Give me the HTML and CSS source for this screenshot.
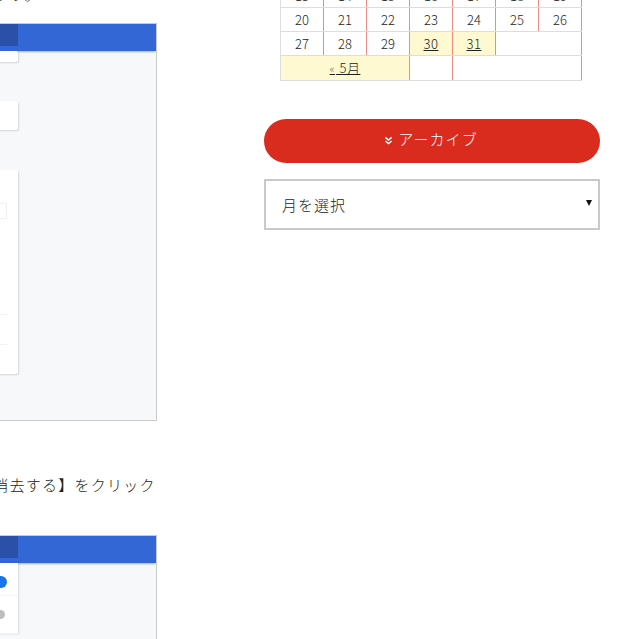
FILE: index.html
```html
<!DOCTYPE html>
<html lang="ja">
<head>
    <meta charset="UTF-8">
    <meta name="viewport" content="width=device-width, initial-scale=1.0">
    <title>ブログ</title>
    <link rel="stylesheet" href="styles.css">
</head>
<body>
    <div class="page">
        <main class="article">
            <p class="first">履歴を消去します。</p>
            <div class="shot">
                <div class="shot-bar"><span class="shot-logo"></span></div>
                <div class="shot-body">
                    <div class="shot-cards">
                        <div class="card card-a"></div>
                        <div class="card card-b"></div>
                        <div class="card card-c">
                            <span class="card-input"></span>
                            <span class="card-line line-a"></span>
                            <span class="card-line line-b"></span>
                        </div>
                    </div>
                </div>
            </div>
            <p class="second">【データを消去する】をクリック</p>
            <div class="shot shot-two">
                <div class="shot-bar"><span class="shot-logo"></span></div>
                <div class="shot-body">
                    <div class="shot-list">
                        <div class="list-row row-on"><span class="dot dot-on"></span></div>
                        <div class="list-row row-off"><span class="dot dot-off"></span></div>
                    </div>
                </div>
            </div>
        </main>

        <aside class="sidebar">
            <table class="calendar">
                <tbody>
                    <tr><td>13</td><td>14</td><td>15</td><td>16</td><td>17</td><td>18</td><td>19</td></tr>
                    <tr><td>20</td><td>21</td><td>22</td><td>23</td><td>24</td><td>25</td><td>26</td></tr>
                    <tr>
                        <td>27</td><td>28</td><td>29</td>
                        <td class="has-post"><a href="#">30</a></td>
                        <td class="has-post"><a href="#">31</a></td>
                        <td colspan="2"></td>
                    </tr>
                    <tr>
                        <td colspan="3" class="has-post"><a href="#"><small>«</small> 5月</a></td>
                        <td></td>
                        <td colspan="3"></td>
                    </tr>
                </tbody>
            </table>

            <h3 class="widget-title">
                <svg class="chevron" viewBox="0 0 10 10" width="9" height="9">
                    <path d="M1.5 1.5 5 4.5 8.5 1.5M1.5 5.5 5 8.5 8.5 5.5" fill="none" stroke="#fff" stroke-width="1.6"/>
                </svg>
                アーカイブ
            </h3>
            <div class="select-wrap">
                <select class="archive-select">
                    <option>月を選択</option>
                </select>
            </div>
        </aside>
    </div>
</body>
</html>
```

FILE: styles.css
```css
html, body {
    margin: 0;
    padding: 0;
    height: 100%;
    overflow: hidden;
    background-color: #fff;
}

body {
    font-family: "Noto Sans CJK JP", "Noto Sans", sans-serif;
    font-weight: 300;
    color: #222;
}

.page {
    display: flex;
    gap: 107px;
    margin-top: -18px;
}

/* 記事 */
.article {
    width: 245px;
    margin-left: -88px;
    flex-shrink: 0;
}

.article p {
    margin: 0;
    font-size: 15px;
    line-height: 26px;
    letter-spacing: 1.25px;
    white-space: nowrap;
}

.article .first {
    margin: -1px 0 16px;
    text-indent: -16px;
}

.article .second {
    margin: 51px 0 37px;
}

.shot {
    height: 396px;
    border: 1px solid #c9c9c9;
    border-left: none;
    background-color: #f7f8fa;
    overflow: hidden;
}

.article .shot-two {
    height: 200px;
}

.shot-bar {
    height: 27px;
    background-color: #3367d6;
    box-shadow: 0 1px 2px rgba(0, 0, 0, .3);
}

.shot-logo {
    display: block;
    width: 106px;
    height: 22px;
    background-color: #2a50a8;
}

.shot-cards {
    width: 106px;
}

.card {
    background-color: #fff;
    border-radius: 0 2px 2px 0;
    box-shadow: 1px 1px 2px rgba(0, 0, 0, .14);
}

.card-a {
    height: 11px;
}

.card-b {
    height: 29px;
    margin-top: 39px;
}

.card-c {
    height: 204px;
    margin-top: 40px;
    padding-top: 33px;
    box-sizing: border-box;
}

.card-input {
    display: block;
    width: 95px;
    height: 16px;
    border: 1px solid #f0f0f0;
    box-sizing: border-box;
}

.card-line {
    display: block;
    width: 95px;
    height: 1px;
    background-color: #f1f1f1;
}

.line-a {
    margin-top: 95px;
}

.line-b {
    margin-top: 29px;
}

.shot-list {
    width: 106px;
    height: 100%;
    background-color: #fff;
    box-shadow: 1px 0 2px rgba(0, 0, 0, .12);
}

.list-row {
    display: flex;
    justify-content: flex-end;
    align-items: center;
    padding-right: 11px;
    border-bottom: 1px solid #f3f3f3;
    box-sizing: border-box;
}

.row-on {
    height: 33px;
    padding-top: 5px;
}

.row-off {
    height: 38px;
}

.dot {
    border-radius: 50%;
}

.dot-on {
    width: 12px;
    height: 12px;
    background-color: #1a73e8;
}

.dot-off {
    width: 9px;
    height: 9px;
    margin-right: 2px;
    background-color: #bdbdbd;
}

/* サイドバー */
.sidebar {
    width: 336px;
    flex-shrink: 0;
    padding-top: 1px;
}

.calendar {
    width: 302px;
    margin-left: 16px;
    border-collapse: collapse;
    table-layout: fixed;
    font-size: 13px;
}

.calendar td {
    height: 23px;
    padding: 0;
    text-align: center;
    line-height: 23px;
    border: 1px solid #ddd;
    border-right-color: #ec8c86;
}

.calendar .has-post {
    background-color: #fef9d0;
}

.calendar a {
    color: #222;
    letter-spacing: .5px;
}

.calendar small {
    font-size: 11px;
    margin-right: 1px;
    color: #777;
}

.widget-title {
    display: flex;
    justify-content: center;
    align-items: center;
    gap: 5px;
    height: 44px;
    margin: 38px 0 16px;
    padding: 0 2px 6px 0;
    box-sizing: border-box;
    border-radius: 22px;
    background-color: #d92c1f;
    color: #fff;
    font-size: 15px;
    font-weight: 300;
    letter-spacing: 1.1px;
}

.chevron {
    margin-top: 4px;
}

.select-wrap {
    position: relative;
}

/* 古いブラウザの黒い三角 */
.select-wrap::after {
    content: "";
    position: absolute;
    top: 21px;
    right: 8px;
    border-top: 6px solid #111;
    border-left: 3px solid transparent;
    border-right: 3px solid transparent;
}

.archive-select {
    display: block;
    width: 336px;
    height: 51px;
    padding: 0 16px;
    border: 2px solid #c9c9c9;
    border-radius: 0;
    background-color: #fff;
    color: #222;
    font-family: inherit;
    font-size: 15px;
    font-weight: 300;
    letter-spacing: 1px;
    appearance: none;
}
```
